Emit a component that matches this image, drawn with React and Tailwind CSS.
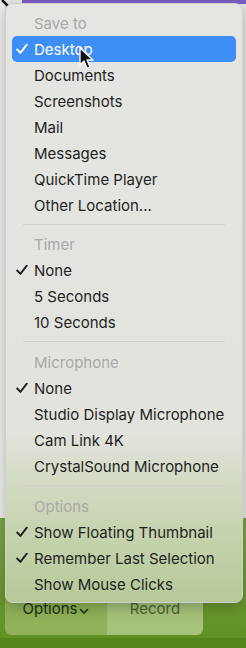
import React from 'react';

const Check = () => (
  <svg width="12" height="11" viewBox="0 0 12 11" className="absolute left-[4px] top-1/2 -translate-y-1/2">
    <path d="M1.2 6 L4.4 9.4 L10.8 1.2" fill="none" stroke="currentColor" strokeWidth="1.9" strokeLinecap="round" strokeLinejoin="round" />
  </svg>
);

const Header = ({ children }) => (
  <div className="h-[26px] flex items-center pl-[22px] text-[#a9a9a7]">{children}</div>
);

const Item = ({ label, checked, active }) => (
  <div
    className={
      'relative h-[26px] flex items-center pl-[22px] rounded-[5px] ' +
      (active ? 'bg-[#3d8ef5] text-white' : 'text-[#1f1f1f]')
    }
  >
    {checked && <Check />}
    {label}
  </div>
);

const Sep = ({ extra }) => (
  <div className={'h-[1px] bg-[#cfcfcc] mx-[11px] mt-[6px] ' + (extra ? 'mb-[7px]' : 'mb-[6px]')} />
);

const App = () => {
  return (
    <div
      className="relative w-[246px] h-[648px] overflow-hidden bg-[#e9e9e6]"
      style={{ fontFamily: 'Inter, "Noto Sans", sans-serif' }}
    >
      {/* background window */}
      <div className="flex flex-col h-full">
        <div className="flex-1 flex">
          <div className="w-[6px] bg-[#eeeeec] border-r border-[#d6d6d4]" />
          <div className="flex-1 bg-[#e6e6e3]" />
        </div>
        <div className="h-[130px] bg-gradient-to-b from-[#7da645] to-[#5f8f22] flex flex-col">
          <div className="flex-1" />
          <div className="flex h-[52px] ml-[5px] mr-[43px] rounded-b-[6px] overflow-hidden">
            <div className="w-[102px] bg-[#8fb158] flex items-center justify-center text-[15px] text-[#213012] pt-[1px]">
              Options
              <svg width="10" height="7" viewBox="0 0 10 7" className="ml-[2px] mt-[3px]">
                <path d="M1.5 1.5 L5 5 L8.5 1.5" fill="none" stroke="#213012" strokeWidth="1.6" strokeLinecap="round" />
              </svg>
            </div>
            <div className="flex-1 bg-[#a5c27a] flex items-center justify-center text-[15px] text-[#4a6330] pt-[1px]">
              Record
            </div>
          </div>
          <div className="h-[10px] bg-[#55841c] mt-[3px]" />
        </div>
      </div>

      {/* purple strip at top */}
      <div className="absolute top-0 left-[22px] right-0 h-[4px] bg-[#7b5fc4]" />

      {/* top-left cursor */}
      <svg width="18" height="16" viewBox="0 0 18 16" className="absolute left-0 top-0">
        <path d="M2 0 L15 13" stroke="#111" strokeWidth="2.5" />
      </svg>

      {/* menu */}
      <div className="absolute left-[5px] top-[3px] w-[238px] h-[600px] rounded-[8px] border border-[#cfcfcc] shadow-[0_4px_14px_rgba(0,0,0,0.25)] bg-[linear-gradient(to_bottom,#e5e5e2_0%,#e2e3dd_72%,#cfd9bc_82%,#b6c998_100%)] px-[6px] pt-[6px] text-[15px] leading-none">
        <Header>Save to</Header>
        <Item label="Desktop" checked active />
        <Item label="Documents" />
        <Item label="Screenshots" />
        <Item label="Mail" />
        <Item label="Messages" />
        <Item label="QuickTime Player" />
        <Item label="Other Location..." />
        <Sep />
        <Header>Timer</Header>
        <Item label="None" checked />
        <Item label="5 Seconds" />
        <Item label="10 Seconds" />
        <Sep extra />
        <Header>Microphone</Header>
        <Item label="None" checked />
        <Item label="Studio Display Microphone" />
        <Item label="Cam Link 4K" />
        <Item label="CrystalSound Microphone" />
        <Sep extra />
        <Header>Options</Header>
        <Item label="Show Floating Thumbnail" checked />
        <Item label="Remember Last Selection" checked />
        <Item label="Show Mouse Clicks" />
      </div>

      {/* mouse pointer */}
      <svg width="16" height="24" viewBox="0 0 16 24" className="absolute left-[79px] top-[47px]">
        <path d="M1 1 L1 18 L5 14 L8 21 L11 20 L8 13 L14 13 Z" fill="#111" stroke="#fff" strokeWidth="1.3" strokeLinejoin="round" />
      </svg>
    </div>
  );
};

export default App;
